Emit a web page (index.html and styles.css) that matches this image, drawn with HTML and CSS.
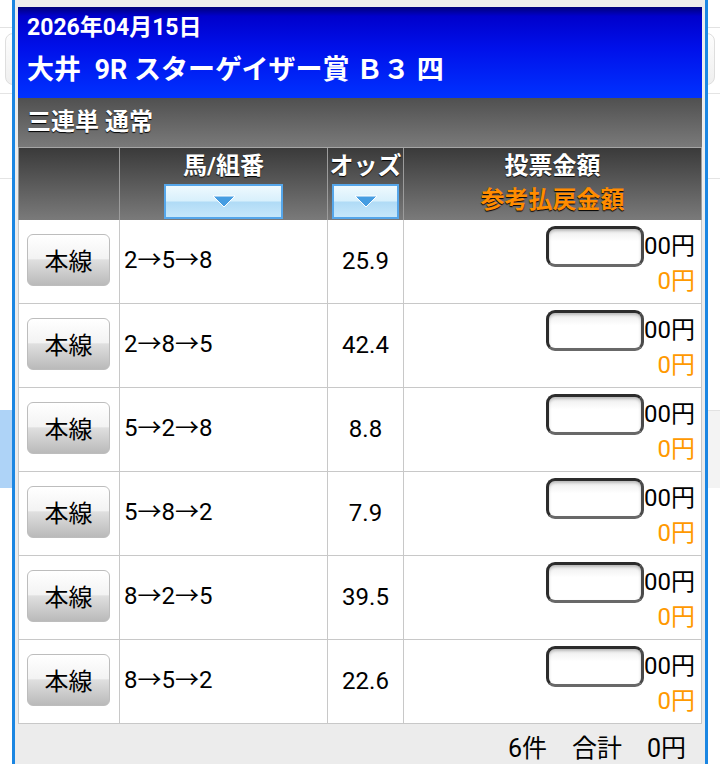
FILE: index.html
```html
<!DOCTYPE html>
<html lang="ja">
<head>
<meta charset="utf-8">
<title>三連単 通常</title>
<link rel="stylesheet" href="styles.css">
</head>
<body>
<div class="page">
  <div class="pg-bar"></div>
  <div class="pg-box"></div>
  <div class="pg-rule r1"></div>
  <div class="pg-rule r2"></div>
  <div class="pg-tabs"><div class="pg-tab on"></div><div class="pg-tab"></div></div>
</div>
<div class="dialog">
  <div class="race-head">
    <div class="race-date">2026年04月15日</div>
    <div class="race-name">大井&nbsp;&nbsp;9R スターゲイザー賞 Ｂ３ 四</div>
  </div>
  <div class="bet-type">三連単 通常</div>
  <div class="row head">
    <div class="cell"></div>
    <div class="cell hc">
      <div class="ht">馬/組番</div>
      <div class="sort w1"><svg width="24" height="13" viewBox="0 0 24 13"><polygon points="1,1 23,1 12,12" fill="#459de2" stroke="#ffffff" stroke-width="1"/></svg></div>
    </div>
    <div class="cell hc">
      <div class="ht">オッズ</div>
      <div class="sort w2"><svg width="24" height="13" viewBox="0 0 24 13"><polygon points="1,1 23,1 12,12" fill="#459de2" stroke="#ffffff" stroke-width="1"/></svg></div>
    </div>
    <div class="cell money-h">
      <div>投票金額</div>
      <div class="ref">参考払戻金額</div>
    </div>
  </div>
  <div class="row body-row">
    <div class="cell c1"><button class="btn">本線</button></div>
    <div class="cell c2">2→5→8</div>
    <div class="cell c3">25.9</div>
    <div class="cell c4"><div class="amt"><input class="inp" type="text"><span class="yen">00円</span></div><div class="ret">0円</div></div>
  </div>
  <div class="row body-row">
    <div class="cell c1"><button class="btn">本線</button></div>
    <div class="cell c2">2→8→5</div>
    <div class="cell c3">42.4</div>
    <div class="cell c4"><div class="amt"><input class="inp" type="text"><span class="yen">00円</span></div><div class="ret">0円</div></div>
  </div>
  <div class="row body-row">
    <div class="cell c1"><button class="btn">本線</button></div>
    <div class="cell c2">5→2→8</div>
    <div class="cell c3">8.8</div>
    <div class="cell c4"><div class="amt"><input class="inp" type="text"><span class="yen">00円</span></div><div class="ret">0円</div></div>
  </div>
  <div class="row body-row">
    <div class="cell c1"><button class="btn">本線</button></div>
    <div class="cell c2">5→8→2</div>
    <div class="cell c3">7.9</div>
    <div class="cell c4"><div class="amt"><input class="inp" type="text"><span class="yen">00円</span></div><div class="ret">0円</div></div>
  </div>
  <div class="row body-row">
    <div class="cell c1"><button class="btn">本線</button></div>
    <div class="cell c2">8→2→5</div>
    <div class="cell c3">39.5</div>
    <div class="cell c4"><div class="amt"><input class="inp" type="text"><span class="yen">00円</span></div><div class="ret">0円</div></div>
  </div>
  <div class="row body-row">
    <div class="cell c1"><button class="btn">本線</button></div>
    <div class="cell c2">8→5→2</div>
    <div class="cell c3">22.6</div>
    <div class="cell c4"><div class="amt"><input class="inp" type="text"><span class="yen">00円</span></div><div class="ret">0円</div></div>
  </div>
  <div class="foot">6件　合計　0円</div>
</div>
</body>
</html>
```

FILE: styles.css
```css
* { box-sizing: border-box; }
html, body { margin: 0; padding: 0; }
body {
  width: 720px;
  height: 764px;
  overflow: hidden;
  position: relative;
  background: #ffffff;
  font-family: Roboto, "Noto Sans CJK JP", sans-serif;
  color: #000;
}

/* background page */
.page { width: 720px; }
.pg-bar { height: 28px; border-bottom: 1px solid #e2e2e2; }
.pg-box {
  margin: 5px 5px 0;
  height: 52px;
  border: 1px solid #dedede;
  border-radius: 8px;
  background: linear-gradient(#fdfdfd, #efefef);
}
.pg-rule { border-bottom: 1px solid #e4e4e4; }
.r1 { height: 9px; }
.r2 { height: 85px; }
.pg-tabs { display: flex; margin-top: 231px; height: 78px; }
.pg-tab { flex: 1; background: #f3f3f3; border-top: 1px solid #e2e2e2; }
.pg-tab.on { background: #aed3f7; border-top-color: #aed3f7; }

/* dialog */
.dialog {
  position: absolute;
  top: 0;
  left: 12px;
  width: 696px;
  height: 764px;
  background: #ececec;
  border-left: 3px solid #1b86e2;
  border-right: 3px solid #1b86e2;
  padding: 7px 3px 0;
}
.race-head {
  height: 91px;
  background: linear-gradient(#00007a 0%, #0000cc 10%, #0010ea 45%, #0032ff 100%);
  color: #fff;
  font-weight: bold;
  padding: 6px 0 0 9px;
}
.race-date { font-size: 23px; line-height: 30px; }
.race-name { font-size: 27px; line-height: 40px; margin-top: 7px; white-space: nowrap; }

.bet-type {
  height: 50px;
  background: linear-gradient(#505050, #7a7a7a);
  border-bottom: 1px solid #a5a5a5;
  color: #fff;
  font-weight: bold;
  font-size: 24px;
  line-height: 49px;
  padding-left: 9px;
  text-shadow: 0 1px 1px #000;
}

.row { display: grid; grid-template-columns: 101px 208px 76px 299px; }
.cell { border-left: 1px solid #c8c8c8; }
.cell:last-child { border-right: 1px solid #c8c8c8; }

.head { height: 72px; background: linear-gradient(#3a3a3a, #7a7a7a); }
.head .cell { border-color: #9c9c9c; }
.hc { display: flex; flex-direction: column; align-items: center; }
.ht {
  color: #fff;
  font-weight: bold;
  font-size: 24px;
  line-height: 36px;
  text-shadow: 0 1px 1px #000;
  white-space: nowrap;
}
.sort {
  height: 35px;
  border: 2px solid #55a6ea;
  background: linear-gradient(#eef9fe 0%, #d8f0fc 48%, #b0dbf6 52%, #c6e7fa 100%);
  display: flex;
  align-items: center;
  justify-content: center;
}
.sort svg { display: block; }
.w1 { width: 119px; }
.w2 { width: 67px; }
.money-h {
  text-align: center;
  font-weight: bold;
  font-size: 24px;
  line-height: 34px;
  padding-top: 1px;
  color: #fff;
  text-shadow: 0 1px 1px #000;
}
.money-h .ref { color: #ff8c00; }

.body-row { height: 84px; background: #fff; border-bottom: 1px solid #c8c8c8; }
.body-row .cell { display: flex; align-items: center; font-size: 24px; }
.c1 { padding-left: 8px; padding-bottom: 4px; }
.btn {
  width: 83px;
  height: 52px;
  margin: 0;
  padding: 0;
  border: 1px solid #bdbdbd;
  border-radius: 6px;
  background: linear-gradient(#ffffff 0%, #f3f3f3 47%, #dfdfdf 50%, #bababa 100%);
  font-family: inherit;
  font-size: 24px;
  color: #000;
  display: flex;
  align-items: center;
  justify-content: center;
}
.c2 { padding-left: 4px; padding-bottom: 8px; }
.c3 { justify-content: center; padding-bottom: 2px; }
.body-row .c4 {
  flex-direction: column;
  align-items: flex-end;
  justify-content: flex-start;
  padding: 6px 6px 0 0;
}
.amt { display: flex; align-items: center; }
.inp {
  width: 98px;
  height: 41px;
  margin: 0;
  padding: 0;
  border: 3px solid #2c2c2c;
  border-bottom-color: #686868;
  border-right-color: #4a4a4a;
  border-radius: 9px;
  background: linear-gradient(#ececec, #ffffff 35%);
  box-shadow: inset 0 2px 3px rgba(0, 0, 0, 0.22);
}
.yen { line-height: 41px; }
.ret { color: #ff9900; line-height: 28px; }

.foot {
  text-align: right;
  font-size: 25px;
  line-height: 34px;
  padding: 8px 16px 0 0;
}
```
